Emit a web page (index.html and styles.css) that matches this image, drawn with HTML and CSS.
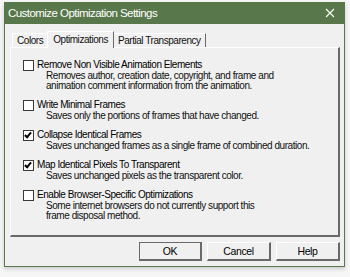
FILE: index.html
```html
<!DOCTYPE html>
<html lang="en">
<head>
  <meta charset="UTF-8">
  <title>Customize Optimization Settings</title>
  <link rel="stylesheet" href="styles.css">
</head>
<body>

  <div class="window">
    <div class="titlebar">
      <span class="title">Customize Optimization Settings</span>
      <svg class="close" width="10" height="10" viewBox="0 0 10 10">
        <path d="M1 1 L9 9 M9 1 L1 9" stroke="#fff" stroke-width="1.1" fill="none"/>
      </svg>
    </div>

    <div class="content">
      <!-- Tabs -->
      <div class="tabs">
        <div class="tab">Colors</div>
        <div class="tab active">Optimizations</div>
        <div class="tab">Partial Transparency</div>
      </div>

      <div class="panel">
        <div class="option">
          <span class="check"></span>
          <div class="text">
            <div class="label">Remove Non Visible Animation Elements</div>
            <div class="desc">Removes author, creation date, copyright, and frame and<br>animation comment information from the animation.</div>
          </div>
        </div>

        <div class="option">
          <span class="check"></span>
          <div class="text">
            <div class="label">Write Minimal Frames</div>
            <div class="desc">Saves only the portions of frames that have changed.</div>
          </div>
        </div>

        <div class="option">
          <span class="check checked"></span>
          <div class="text">
            <div class="label">Collapse Identical Frames</div>
            <div class="desc">Saves unchanged frames as a single frame of combined duration.</div>
          </div>
        </div>

        <div class="option">
          <span class="check checked"></span>
          <div class="text">
            <div class="label">Map Identical Pixels To Transparent</div>
            <div class="desc">Saves unchanged pixels as the transparent color.</div>
          </div>
        </div>

        <div class="option">
          <span class="check"></span>
          <div class="text">
            <div class="label">Enable Browser-Specific Optimizations</div>
            <div class="desc">Some internet browsers do not currently support this<br>frame disposal method.</div>
          </div>
        </div>
      </div>

      <!-- Dialog buttons -->
      <div class="buttons">
        <button class="default">OK</button>
        <button>Cancel</button>
        <button>Help</button>
      </div>
    </div>
  </div>

</body>
</html>
```

FILE: styles.css
```css
body {
  margin: 0;
  padding: 0;
  background: #f6f6f6;
  font-family: 'Liberation Sans', Arial, sans-serif;
  font-size: 10px;
  letter-spacing: -0.45px;
  color: #000;
  height: 277px;
  overflow: hidden;
}

/* Window frame */
.window {
  margin: 2px 0 0 4px;
  width: 341px;
  height: 265px;
  background: #f0f0f0;
  border: 1px solid #58774a;
  border-top: none;
  box-sizing: border-box;
  box-shadow: 0 2px 4px rgba(0, 0, 0, 0.18);
}

.titlebar {
  height: 22px;
  margin: 0 -1px;
  background: #58774a;
  color: #fff;
  display: flex;
  align-items: center;
  justify-content: space-between;
  padding: 0 10px 0 4px;
}

.title {
  font-size: 11.5px;
  letter-spacing: -0.55px;
}

.content {
  padding: 7px 4px 0 5px;
}

/* Tabs */
.tabs {
  display: flex;
  align-items: flex-end;
  height: 16px;
  padding-left: 2px;
}

.tab {
  height: 13px;
  line-height: 13px;
  padding: 0 4px;
  margin-right: -1px;
  border: 1px solid #fff;
  border-right-color: #696969;
  border-bottom: none;
  color: #111;
}

.tab.active {
  height: 16px;
  line-height: 15px;
  padding: 0 5px;
  position: relative;
  z-index: 1;
  background: #f0f0f0;
  margin-bottom: -1px;
}

.panel {
  border: 1px solid #fff;
  border-right: 2px solid #696969;
  border-bottom: 2px solid #696969;
  height: 190px;
  box-sizing: border-box;
  padding: 12px 0 0 12px;
  display: flex;
  flex-direction: column;
  gap: 9px;
}

/* Options */
.option {
  display: flex;
  align-items: flex-start;
}

.check {
  width: 9px;
  height: 9px;
  border: 1px solid #3a3a3a;
  background: #fff;
  margin: 0 3px 0 0;
  flex-shrink: 0;
  position: relative;
}

.check.checked::after {
  content: "";
  position: absolute;
  left: 2px;
  top: 0;
  width: 2px;
  height: 5px;
  border: solid #000;
  border-width: 0 2px 2px 0;
  transform: rotate(40deg);
}

.label {
  line-height: 10px;
  white-space: nowrap;
}

.desc {
  padding: 1px 0 0 9px;
  line-height: 10px;
  white-space: nowrap;
  color: #111;
}

/* Buttons */
.buttons {
  display: flex;
  justify-content: flex-end;
  gap: 5px;
  margin-top: 5px;
}

button {
  width: 64px;
  height: 19px;
  font-family: 'Liberation Sans', Arial, sans-serif;
  font-size: 10.5px;
  letter-spacing: -0.4px;
  color: #000;
  background: #f0f0f0;
  border: 1px solid #fff;
  border-right: 2px solid #696969;
  border-bottom: 2px solid #696969;
  padding: 0;
}

button.default {
  width: 63px;
  outline: 1px solid #6a6a6a;
  outline-offset: -1px;
}
```
